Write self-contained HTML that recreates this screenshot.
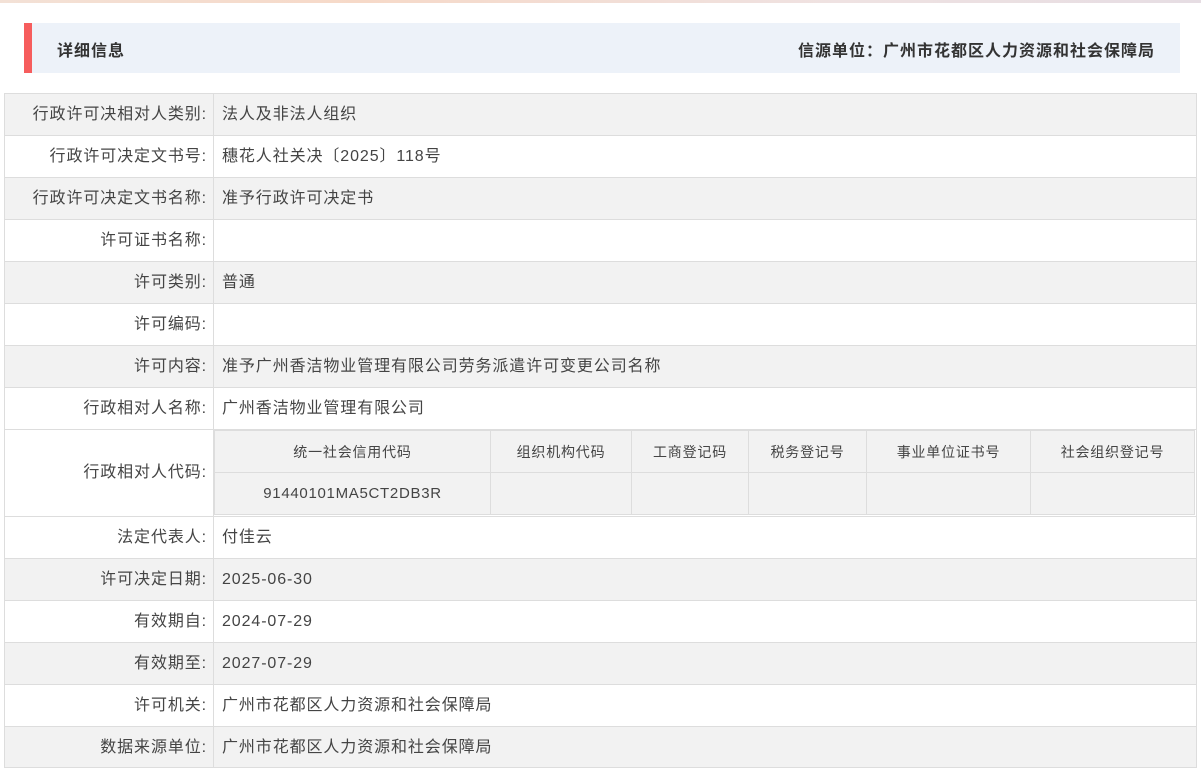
<!DOCTYPE html>
<html><head><meta charset="utf-8"><style>
*{margin:0;padding:0;box-sizing:border-box}
body{width:1201px;height:771px;background:#fff;font-family:"Liberation Sans","Noto Sans CJK SC",sans-serif;color:#444;position:relative;overflow:hidden}
.top{position:absolute;left:0;top:0;width:1201px;height:3px;background:linear-gradient(90deg,#f3e1d6,#f6d9c8 30%,#efe2e2 70%,#e6dde3)}
.hd{position:absolute;left:24px;top:23px;width:1156px;height:50px;background:#edf2f9;border-left:8px solid #f65d5d}
.hd .l{position:absolute;left:25px;top:14px;font-size:16px;font-weight:bold;color:#333;letter-spacing:1px}
.hd .r{position:absolute;right:25px;top:14px;font-size:16px;font-weight:bold;color:#333;letter-spacing:1px}
.row{position:absolute;left:4px;width:1193px;border:1px solid #ddd;border-bottom:none;font-size:16px;letter-spacing:0.9px}
.row.g{background:#f2f2f2}
.row .k{position:absolute;left:0;top:0;bottom:0;width:209px;border-right:1px solid #ddd;text-align:right;padding-right:6px}
.row .v{position:absolute;left:217px;top:0}
.row .k,.row .v{line-height:41px}
.last{position:absolute;left:4px;top:767px;width:1193px;border-top:1px solid #ddd}
table{position:absolute;left:214px;top:430px;width:981px;border-collapse:collapse;background:#f2f2f2;font-size:14px;letter-spacing:0.8px}
td{border:1px solid #ddd;text-align:center;height:42px;color:#444}
</style></head><body>
<div class="top"></div>
<div class="hd"><span class="l">详细信息</span><span class="r">信源单位：广州市花都区人力资源和社会保障局</span></div>

<div class="row g" style="top:93px;height:42px"><div class="k">行政许可决相对人类别:</div><div class="v">法人及非法人组织</div></div>
<div class="row" style="top:135px;height:42px"><div class="k">行政许可决定文书号:</div><div class="v">穗花人社关决〔2025〕118号</div></div>
<div class="row g" style="top:177px;height:42px"><div class="k">行政许可决定文书名称:</div><div class="v">准予行政许可决定书</div></div>
<div class="row" style="top:219px;height:42px"><div class="k">许可证书名称:</div><div class="v"></div></div>
<div class="row g" style="top:261px;height:42px"><div class="k">许可类别:</div><div class="v">普通</div></div>
<div class="row" style="top:303px;height:42px"><div class="k">许可编码:</div><div class="v"></div></div>
<div class="row g" style="top:345px;height:42px"><div class="k">许可内容:</div><div class="v">准予广州香洁物业管理有限公司劳务派遣许可变更公司名称</div></div>
<div class="row" style="top:387px;height:42px"><div class="k">行政相对人名称:</div><div class="v">广州香洁物业管理有限公司</div></div>
<div class="row" style="top:429px;height:87px"><div class="k" style="line-height:86px">行政相对人代码:</div></div>
<table>
<tr><td style="width:276px">统一社会信用代码</td><td style="width:141px">组织机构代码</td><td style="width:117px">工商登记码</td><td style="width:118px">税务登记号</td><td style="width:164px">事业单位证书号</td><td>社会组织登记号</td></tr>
<tr><td style="font-size:15px;letter-spacing:0.7px">91440101MA5CT2DB3R</td><td></td><td></td><td></td><td></td><td></td></tr>
</table>
<div class="row" style="top:516px;height:42px"><div class="k">法定代表人:</div><div class="v">付佳云</div></div>
<div class="row g" style="top:558px;height:42px"><div class="k">许可决定日期:</div><div class="v">2025-06-30</div></div>
<div class="row" style="top:600px;height:42px"><div class="k">有效期自:</div><div class="v">2024-07-29</div></div>
<div class="row g" style="top:642px;height:42px"><div class="k">有效期至:</div><div class="v">2027-07-29</div></div>
<div class="row" style="top:684px;height:42px"><div class="k">许可机关:</div><div class="v">广州市花都区人力资源和社会保障局</div></div>
<div class="row g" style="top:726px;height:41px"><div class="k">数据来源单位:</div><div class="v">广州市花都区人力资源和社会保障局</div></div>
<div class="last"></div>
</body></html>
